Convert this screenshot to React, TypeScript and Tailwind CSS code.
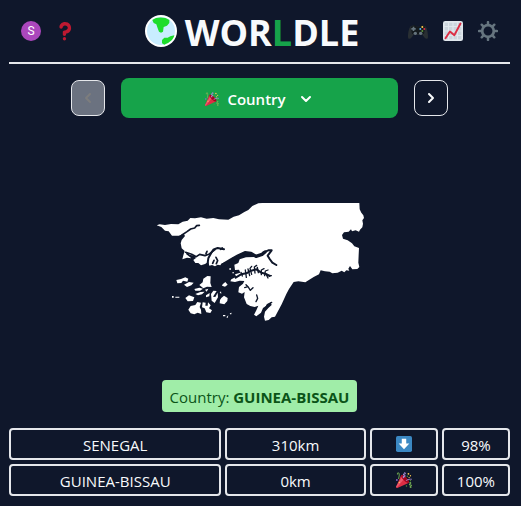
import React from "react";
import { ChevronDown, ChevronLeft, ChevronRight } from "lucide-react";

function Globe() {
  return (
    <svg viewBox="0 0 96 96" className="size-8 shrink-0" aria-hidden="true">
      <circle cx="48" cy="48" r="48" fill="#fff" />
      <circle cx="48" cy="48" r="42" fill="#c8edff" />
      <path d="M22 15C34 5 60 5 73 15V24L66 32L56 36L54 50L48 53L42 50L38 40L34 28L26 24Z" fill="#1ddd2b" />
      <path d="M88 61L76 64L68 68H58L51 75V85L58 89C74 84 86 72 88 61Z" fill="#1ddd2b" />
    </svg>
  );
}

function QuestionMark() {
  return (
    <svg viewBox="0 0 36 36" className="size-5" fill="#be1931" aria-hidden="true">
      <path d="M17 27c-1.657 0-3-1.343-3-3v-4c0-1.657 1.343-3 3-3 .603-.006 6-1 6-5 0-2-2-4-5-4-2.441 0-4 2-4 3 0 1.657-1.343 3-3 3s-3-1.343-3-3c0-4.878 4.58-9 10-9 8 0 11 5.982 11 11 0 4.145-2.277 7.313-6.413 8.92-.9.351-1.79.587-2.587.747V24c0 1.657-1.343 3-3 3z" />
      <circle cx="17" cy="32" r="3" />
    </svg>
  );
}

function Gamepad() {
  return (
    <svg viewBox="0 0 60 60" className="size-5" aria-hidden="true">
      <path d="M0 47C0 33 4 18 9 15L19 13L25 17H35L41 13L51 15C56 18 60 33 60 47C60 55 54 55 50 50L43 41H17L10 50C6 55 0 55 0 47Z" fill="#292f33" />
      <path d="M8 17L19 12L26 17H34L41 12L52 17L48 39H12Z" fill="#141a1e" />
      <path d="M14 17h5v4h4v5h-4v4h-5v-4h-4v-5h4z" fill="#66757f" />
      <circle cx="22" cy="37" r="5" fill="#66757f" />
      <circle cx="38" cy="37" r="5" fill="#66757f" />
      <circle cx="43" cy="18" r="3" fill="#ffcc4d" />
      <circle cx="49" cy="24" r="3" fill="#dd2e44" />
      <circle cx="37" cy="24" r="3" fill="#55acee" />
      <circle cx="43" cy="30" r="3" fill="#5c913b" />
    </svg>
  );
}

function Chart() {
  return (
    <svg viewBox="0 0 36 36" className="size-5" aria-hidden="true">
      <rect width="36" height="36" rx="4" fill="#e1e8ed" />
      <path
        d="M3 3h6v6H3zM11 3h6v6h-6zM19 3h6v6h-6zM27 3h6v6h-6zM3 11h6v6H3zM11 11h6v6h-6zM19 11h6v6h-6zM27 11h6v6h-6zM3 19h6v6H3zM11 19h6v6h-6zM19 19h6v6h-6zM27 19h6v6h-6zM3 27h6v6H3zM11 27h6v6h-6zM19 27h6v6h-6zM27 27h6v6h-6z"
        fill="#ccd6dd"
      />
      <path d="M4.500 31L12.500 19L20.500 25.500L31.500 4.500" fill="none" stroke="#dd2e44" strokeWidth="3.500" strokeLinecap="round" strokeLinejoin="round" />
    </svg>
  );
}

function Gear() {
  return (
    <svg viewBox="0 0 36 36" className="size-5" fill="none" stroke="#66757f" aria-hidden="true">
      <circle cx="18" cy="18" r="10.500" strokeWidth="5" />
      <path d="M18 6V2M18 30V34M6 18H2M30 18H34M9.500 9.500L6.700 6.700M26.500 26.500L29.300 29.300M26.500 9.500L29.300 6.700M9.500 26.500L6.700 29.300" strokeWidth="4.500" strokeLinecap="round" />
    </svg>
  );
}

function DownArrow() {
  return (
    <svg viewBox="0 0 36 36" className="size-4" role="img" aria-label="South">
      <rect width="36" height="36" rx="4" fill="#3b88c3" />
      <path d="M13 6h10v11h7L18 30 6 17h7z" fill="#fff" />
    </svg>
  );
}

function Popper({ className }: { className: string }) {
  return (
    <svg viewBox="0 0 36 36" className={className} aria-hidden="true">
      <path fill="#DD2E44" d="M11.626 7.488c-.112.112-.197.247-.268.395l-.008-.008L.134 33.141l.011.011c-.208.403.14 1.223.853 1.937.713.713 1.533 1.061 1.936.853l.01.01L28.21 24.735l-.008-.009c.147-.07.282-.155.395-.269 1.562-1.562-.971-6.627-5.656-11.313-4.687-4.686-9.752-7.218-11.315-5.656z" />
      <path fill="#EA596E" d="M13 12L.416 32.506l-.282.635.011.011c-.208.403.14 1.223.853 1.937.232.232.473.408.709.557L17 17l-4-5z" />
      <path fill="#A0041E" d="M23.012 13.066c4.67 4.672 7.263 9.652 5.789 11.124-1.473 1.474-6.453-1.118-11.126-5.788-4.671-4.672-7.263-9.654-5.79-11.127 1.474-1.473 6.454 1.119 11.127 5.791z" />
      <path fill="#AA8DD8" d="M18.59 13.609c-.199.161-.459.245-.734.215-.868-.094-1.598-.396-2.109-.873-.541-.505-.808-1.183-.735-1.862.128-1.192 1.324-2.286 3.363-2.066.793.085 1.147-.17 1.159-.292.014-.121-.277-.446-1.07-.532-.868-.094-1.598-.396-2.11-.873-.541-.505-.809-1.183-.735-1.862.13-1.192 1.325-2.286 3.362-2.065.578.062.883-.057 1.012-.134.103-.063.144-.123.148-.158.012-.121-.275-.446-1.07-.532-.549-.06-.947-.552-.886-1.102.059-.549.55-.946 1.101-.886 2.037.219 2.973 1.542 2.844 2.735-.13 1.194-1.325 2.286-3.364 2.067-.578-.063-.88.057-1.01.134-.103.062-.145.123-.149.157-.013.122.276.446 1.071.532 2.037.22 2.973 1.542 2.844 2.735-.129 1.192-1.324 2.286-3.362 2.065-.578-.062-.882.058-1.012.134-.104.064-.144.124-.148.158-.013.121.276.446 1.07.532.548.06.947.553.886 1.102-.028.274-.167.511-.366.671z" />
      <path fill="#77B255" d="M30.661 22.857c1.973-.557 3.334.323 3.658 1.478.324 1.154-.378 2.615-2.35 3.17-.77.216-1.001.584-.97.701.034.118.425.312 1.193.095 1.972-.555 3.333.325 3.657 1.479.326 1.155-.378 2.614-2.351 3.17-.769.216-1.001.585-.967.702.033.117.423.311 1.192.095.53-.149 1.084.16 1.233.691.148.532-.161 1.084-.693 1.234-1.971.555-3.333-.323-3.659-1.479-.324-1.154.379-2.613 2.353-3.169.77-.217 1.001-.584.967-.702-.032-.117-.422-.312-1.19-.096-1.974.556-3.334-.322-3.659-1.479-.325-1.154.378-2.613 2.351-3.17.768-.215.999-.585.967-.701-.034-.118-.423-.312-1.192-.096-.532.15-1.083-.16-1.233-.691-.149-.53.161-1.082.693-1.232z" />
      <path fill="#AA8DD8" d="M23.001 20.16c-.294 0-.584-.129-.782-.375-.345-.432-.274-1.061.156-1.406.218-.175 5.418-4.259 12.767-3.208.547.078.927.584.849 1.131-.078.546-.58.93-1.132.848-6.493-.922-11.187 2.754-11.233 2.791-.186.148-.406.219-.625.219z" />
      <path fill="#77B255" d="M5.754 16c-.095 0-.192-.014-.288-.042-.529-.159-.829-.716-.67-1.245 1.133-3.773 2.16-9.794.898-11.364-.141-.178-.354-.353-.842-.316-.938.072-.849 2.051-.848 2.071.042.551-.372 1.031-.922 1.072-.559.034-1.031-.372-1.072-.923-.103-1.379.326-4.035 2.692-4.214 1.056-.08 1.933.287 2.552 1.057 2.371 2.951-.036 11.506-.542 13.192-.13.433-.528.712-.958.712z" />
      <circle fill="#5C913B" cx="25.5" cy="9.500" r="1.500" />
      <circle fill="#9266CC" cx="2" cy="18" r="2" />
      <circle fill="#5C913B" cx="32.500" cy="19.500" r="1.500" />
      <circle fill="#5C913B" cx="23.500" cy="31.500" r="1.500" />
      <circle fill="#FFCC4D" cx="28" cy="4" r="2" />
      <circle fill="#FFCC4D" cx="32.500" cy="8.500" r="1.500" />
      <circle fill="#FFCC4D" cx="29.500" cy="12.500" r="1.500" />
      <circle fill="#FFCC4D" cx="7.500" cy="23.500" r="1.500" />
    </svg>
  );
}

function CountryShape() {
  return (
    <svg viewBox="0 0 690 420" className="w-[230px]" role="img" aria-label="Outline of the country to guess">
      <g fill="#fff">
        <path d="M35 106L44 103L60 105L78 102L100 103L113 95L128 92L136 84L150 85L168 82L185 86L205 84L222 88L250 89L266 80L282 76L298 66L310 60L322 48L340 40L352 39H643L644 58L649 68L655 76L657 84L652 91L654 101L652 112L645 119L642 125L632 121L621 124L618 118L611 125L597 127L591 135L594 146L608 151L621 160L628 169L642 174L641 194L640 218L643 231L637 237L622 238L615 228L610 236L613 242L604 241L598 247L590 242L578 248L562 250L554 245L540 244L527 241L522 253L506 261L481 277L460 274L446 276L432 297L424 312L410 343L390 380L380 382L371 390L360 392L357 380L360 365L370 354L380 345L377 337L364 347L354 354L348 368L334 379L327 374L334 361L340 347L329 351L316 348L305 342L297 322L299 306L291 311L280 307L282 291L294 281L298 273L284 272L270 276L256 274L259 268L274 260L270 253L286 248L282 239L270 240L268 224L280 219L284 208L303 202L330 201L350 197L330 197L312 186L298 186L283 197L264 202L250 215L230 220L226 226L218 224L210 229L201 225L193 227L190 216L180 222L168 226L160 219L151 219L145 210L153 204L148 197L134 194L125 187L123 192L139 205L126 203L112 208L115 196L119 183L110 175L107 160L110 150L120 138L116 131L101 137L81 137L71 124L60 122L49 111Z" />
        <path d="M94 270L108 267L121 262L130 266L127 275L114 272L109 279L97 280ZM117 284L132 276L146 278L139 286L126 291Z" />
        <path d="M187 258L197 259L196 279L200 291L186 290L175 295L163 285L173 277L175 266ZM148 297L163 293L174 296L165 302L151 302ZM151 312L166 306L179 305L171 313L159 316ZM180 299L190 296L185 305Z" />
        <path d="M121 324L132 316L148 322L144 333L128 334ZM130 359L137 348L151 345L157 336L168 338L164 351L168 359L169 372L158 368L148 373L137 370ZM173 337L182 338L181 347L188 347L189 337L197 346L192 355L201 361L196 369L184 367L179 355L171 352Z" />
        <path d="M183 316L194 309L193 319L183 322ZM198 312L205 302L215 303L204 320L211 321L218 308L219 322L209 339L200 332ZM224 308L228 304L229 311ZM229 324L237 317L248 324L247 333L238 343L224 340L225 330ZM233 283L241 276L248 284L240 290L231 287Z" />
        <path d="M81 318H86V323H81ZM91 320H103V323H91ZM234 375H241V379H234ZM244 382L250 376L248 384ZM254 370L260 368L258 374ZM253 235H258V239H253ZM262 247H267V250H262Z" />
      </g>
      <g fill="none" stroke="#0f172a" strokeLinecap="round" strokeLinejoin="round">
        <path strokeWidth="10" d="M238 222L258 210L279 198L300 188L318 190L333 199L351 193L360 186" />
        <path strokeWidth="6" d="M354 188L370 181H380L368 197L374 207L382 218L394 225M187 226L190 205L199 188L206 178L218 174L237 178" />
        <path strokeWidth="5" d="M111 135L126 125L137 117L149 114L155 107L163 106M122 187L140 193L154 200L164 193L180 197L193 192L210 179M183 191L186 184M214 221L218 212L213 202M227 178L232 174M203 220L207 211" />
        <path strokeWidth="6" d="M272 263L288 253L304 250L318 242L334 238L349 248L361 251L374 258" />
        <path strokeWidth="4" d="M292 258L288 247M304 262L301 240M314 257L309 237M320 253L315 235L320 229M330 249L328 231L335 226M340 248L337 232M349 254V240L357 236M359 257L361 243L369 240M369 264L364 254M379 257L369 256M299 293L309 290L316 301L324 293M309 290L303 284M333 335L338 325L335 315M380 337L367 344L363 351" />
      </g>
    </svg>
  );
}

const guesses = [
  { name: "SENEGAL", distance: "310km", correct: false, proximity: "98%" },
  { name: "GUINEA-BISSAU", distance: "0km", correct: true, proximity: "100%" },
];

const cell = "flex h-8 items-center justify-center rounded border-2 border-gray-200 pt-[2px]";

export default function App() {
  return (
    <div className="min-h-screen bg-slate-900 pr-[11px] pb-[10px] pl-[9px] font-['Open_Sans','Noto_Sans',sans-serif] text-[15px] text-slate-50">
      <header className="flex h-16 items-center border-b-2 border-gray-200 px-3">
        <div className="flex w-[75px] items-center gap-[14px]">
          <button aria-label="Account" className="flex size-5 items-center justify-center rounded-full bg-[#ab47bc] font-[Roboto,sans-serif] text-[12px] text-white">S</button>
          <button aria-label="How to play"><QuestionMark /></button>
        </div>
        <h1 className="flex flex-1 items-center justify-center gap-2 text-[36px] leading-10 font-bold">
          <Globe />
          <span className="pt-1">WOR<span className="text-[#16a34a]">L</span>DLE</span>
        </h1>
        <div className="flex items-center gap-[15px]">
          <button aria-label="Other games"><Gamepad /></button>
          <button aria-label="Statistics"><Chart /></button>
          <button aria-label="Settings"><Gear /></button>
        </div>
      </header>
      <main>
        <nav className="mt-[14px] flex items-center gap-4 px-[62px]" aria-label="Rounds">
          <button disabled aria-label="Previous round" className="flex h-9 w-[34px] items-center justify-center rounded-lg border border-gray-200 bg-[#6b7280] text-[#7d7d7d]">
            <ChevronLeft className="size-4" strokeWidth={3} />
          </button>
          <button aria-haspopup="listbox" className="flex h-10 flex-1 items-center justify-center rounded-lg bg-[#16a34a] pt-[2px] font-semibold text-white">
            <Popper className="mr-2 size-[14px]" />
            Country
            <ChevronDown className="ml-3 size-4" strokeWidth={3} />
          </button>
          <button aria-label="Next round" className="flex h-9 w-[34px] items-center justify-center rounded-lg border border-gray-200">
            <ChevronRight className="size-4" strokeWidth={3} />
          </button>
        </nav>
        <div className="mt-[72px] mb-[50px] flex justify-center">
          <CountryShape />
        </div>
        <div className="flex justify-center">
          <p className="flex h-8 items-center rounded bg-[#a0eda8] px-2 pt-[2px] whitespace-pre text-[#0b5418]">
            Country: <strong className="font-bold">GUINEA-BISSAU</strong>
          </p>
        </div>
        <table className="mt-4 block" aria-label="Guesses">
          <tbody className="flex flex-col gap-1">
            {guesses.map((guess) => (
              <tr key={guess.name} className="grid grid-cols-7 gap-1">
                <td className={`${cell} col-span-3`}>{guess.name}</td>
                <td className={`${cell} col-span-2`}>{guess.distance}</td>
                <td className="flex h-8 items-center justify-center rounded border-2 border-gray-200">
                  {guess.correct ? <Popper className="size-4" /> : <DownArrow />}
                </td>
                <td className={cell}>{guess.proximity}</td>
              </tr>
            ))}
          </tbody>
        </table>
      </main>
    </div>
  );
}
